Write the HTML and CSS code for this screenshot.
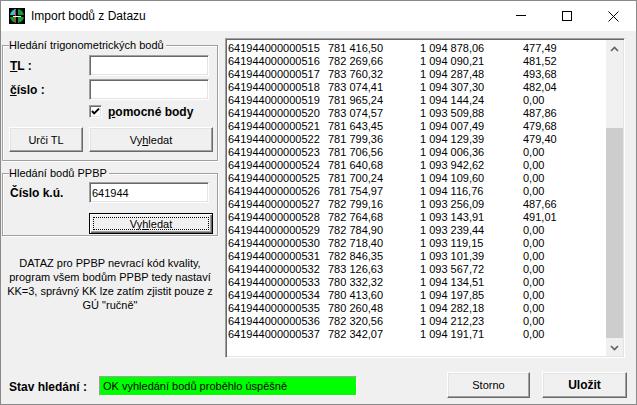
FILE: index.html
```html
<!DOCTYPE html>
<html lang="cs">
<head>
<meta charset="utf-8">
<title>Import bodů z Datazu</title>
<link rel="stylesheet" href="styles.css">
</head>
<body>
<div class="window">
  <div class="titlebar">
    <svg class="app-icon" width="16" height="16" viewBox="0 0 16 16">
      <rect width="16" height="16" fill="#000"/>
      <circle cx="8" cy="8" r="7" fill="#10a030"/>
      <path d="M8 1 A7 7 0 0 0 1 8 H8 Z" fill="#20c8f0"/>
      <path d="M8 1 V15 M1 8 H15" stroke="#000" stroke-width="2"/>
      <path d="M6.5 2 V14" stroke="#ff2020" stroke-width="1"/>
      <path d="M4 8.5 H12" stroke="#fff" stroke-width="1"/>
    </svg>
    <span class="title">Import bodů z Datazu</span>
    <div class="controls">
      <span class="ctl"><svg width="10" height="10" viewBox="0 0 10 10"><path d="M0 4.5 H10" stroke="#000" stroke-width="1"/></svg></span>
      <span class="ctl"><svg width="10" height="10" viewBox="0 0 10 10"><rect x="0.5" y="0.5" width="9" height="9" fill="none" stroke="#000" stroke-width="1"/></svg></span>
      <span class="ctl"><svg width="11" height="11" viewBox="0 0 11 11"><path d="M0.5 0.5 L10.5 10.5 M10.5 0.5 L0.5 10.5" stroke="#000" stroke-width="1"/></svg></span>
    </div>
  </div>

  <div class="main">
    <div class="left">
      <fieldset class="group g1">
        <legend>Hledání trigonometrických bodů</legend>
        <div class="row r-tl">
          <label class="lbl"><u>T</u>L :</label>
          <div class="field"></div>
        </div>
        <div class="row r-cislo">
          <label class="lbl"><u>č</u>íslo :</label>
          <div class="field"></div>
        </div>
        <div class="row r-check">
          <span class="checkbox">
            <svg width="11" height="11" viewBox="0 0 11 11"><path d="M2 5 L4.2 7.4 L9 2.6" fill="none" stroke="#000" stroke-width="2"/></svg>
          </span>
          <span class="check-lbl"><u>p</u>omocné body</span>
        </div>
        <div class="row r-btns">
          <button class="btn b-urci">Urči TL</button>
          <button class="btn b-vyh">Vy<u>h</u>ledat</button>
        </div>
      </fieldset>

      <fieldset class="group g2">
        <legend>Hledání bodů PPBP</legend>
        <div class="row r-ku">
          <label class="lbl">Číslo k.ú.</label>
          <div class="field"><span class="field-text">641944</span></div>
        </div>
        <div class="row r-btn2">
          <button class="btn btn-default b-vyh2">Vy<u>h</u>ledat</button>
        </div>
      </fieldset>

      <p class="note">DATAZ pro PPBP nevrací kód kvality,<br>program všem bodům PPBP tedy nastaví<br>KK=3, správný KK lze zatím zjistit pouze z<br>GÚ "ručně"</p>
    </div>

    <div class="list">
      <div class="rows">
        <div class="lrow"><span>641944000000515</span><span>781 416,50</span><span>1 094 878,06</span><span>477,49</span></div>
        <div class="lrow"><span>641944000000516</span><span>782 269,66</span><span>1 094 090,21</span><span>481,52</span></div>
        <div class="lrow"><span>641944000000517</span><span>783 760,32</span><span>1 094 287,48</span><span>493,68</span></div>
        <div class="lrow"><span>641944000000518</span><span>783 074,41</span><span>1 094 307,30</span><span>482,04</span></div>
        <div class="lrow"><span>641944000000519</span><span>781 965,24</span><span>1 094 144,24</span><span>0,00</span></div>
        <div class="lrow"><span>641944000000520</span><span>783 074,57</span><span>1 093 509,88</span><span>487,86</span></div>
        <div class="lrow"><span>641944000000521</span><span>781 643,45</span><span>1 094 007,49</span><span>479,68</span></div>
        <div class="lrow"><span>641944000000522</span><span>781 799,36</span><span>1 094 129,39</span><span>479,40</span></div>
        <div class="lrow"><span>641944000000523</span><span>781 706,56</span><span>1 094 006,36</span><span>0,00</span></div>
        <div class="lrow"><span>641944000000524</span><span>781 640,68</span><span>1 093 942,62</span><span>0,00</span></div>
        <div class="lrow"><span>641944000000525</span><span>781 700,24</span><span>1 094 109,60</span><span>0,00</span></div>
        <div class="lrow"><span>641944000000526</span><span>781 754,97</span><span>1 094 116,76</span><span>0,00</span></div>
        <div class="lrow"><span>641944000000527</span><span>782 799,16</span><span>1 093 256,09</span><span>487,66</span></div>
        <div class="lrow"><span>641944000000528</span><span>782 764,68</span><span>1 093 143,91</span><span>491,01</span></div>
        <div class="lrow"><span>641944000000529</span><span>782 784,90</span><span>1 093 239,44</span><span>0,00</span></div>
        <div class="lrow"><span>641944000000530</span><span>782 718,40</span><span>1 093 119,15</span><span>0,00</span></div>
        <div class="lrow"><span>641944000000531</span><span>782 846,35</span><span>1 093 101,39</span><span>0,00</span></div>
        <div class="lrow"><span>641944000000532</span><span>783 126,63</span><span>1 093 567,72</span><span>0,00</span></div>
        <div class="lrow"><span>641944000000533</span><span>780 332,32</span><span>1 094 134,51</span><span>0,00</span></div>
        <div class="lrow"><span>641944000000534</span><span>780 413,60</span><span>1 094 197,85</span><span>0,00</span></div>
        <div class="lrow"><span>641944000000535</span><span>780 260,48</span><span>1 094 282,18</span><span>0,00</span></div>
        <div class="lrow"><span>641944000000536</span><span>782 320,56</span><span>1 094 212,23</span><span>0,00</span></div>
        <div class="lrow"><span>641944000000537</span><span>782 342,07</span><span>1 094 191,71</span><span>0,00</span></div>
      </div>
      <div class="scrollbar">
        <div class="sb-btn"><svg width="9" height="6" viewBox="0 0 9 6"><path d="M1 5 L4.5 1.5 L8 5" fill="none" stroke="#606060" stroke-width="1.6"/></svg></div>
        <div class="sb-track"><div class="sb-thumb"></div></div>
        <div class="sb-btn"><svg width="9" height="6" viewBox="0 0 9 6"><path d="M1 1 L4.5 4.5 L8 1" fill="none" stroke="#606060" stroke-width="1.6"/></svg></div>
      </div>
    </div>
  </div>

  <div class="statusbar">
    <span class="status-lbl">Stav hledání :</span>
    <div class="status-box">OK vyhledání bodů proběhlo úspěšně</div>
    <button class="btn b-storno">Storno</button>
    <button class="btn b-ulozit">Uložit</button>
  </div>
</div>
</body>
</html>
```

FILE: styles.css
```css
html, body {
  margin: 0;
  padding: 0;
}

body {
  width: 637px;
  height: 405px;
  overflow: hidden;
  background: #ffffff;
  font-family: "Liberation Sans", Arial, sans-serif;
  font-size: 11px;
  color: #000;
}

.window {
  box-sizing: border-box;
  width: 637px;
  height: 405px;
  border: 1px solid #8a8a8a;
  background: #f0f0f0;
  display: flex;
  flex-direction: column;
}

/* title bar */
.titlebar {
  flex: none;
  height: 30px;
  background: #ffffff;
  display: flex;
  align-items: center;
}

.app-icon {
  flex: none;
  margin-left: 8px;
}

.title {
  margin-left: 6px;
  font-size: 12px;
}

.controls {
  margin-left: auto;
  display: flex;
  height: 100%;
}

.ctl {
  width: 46px;
  display: flex;
  align-items: center;
  justify-content: center;
}

/* main area */
.main {
  flex: none;
  box-sizing: border-box;
  height: 327px;
  padding: 7px 0 0 1px;
  display: flex;
}

.left {
  flex: none;
  width: 216px;
  display: flex;
  flex-direction: column;
}

.group {
  margin: 0;
  padding: 0 0 0 7px;
  border: 1px solid #a0a0a0;
  box-shadow: inset 1px 1px #ffffff, 1px 1px #ffffff;
  min-width: 0;
}

.group legend {
  padding: 0 2px 0 0;
  margin-left: -1px;
  background: #f0f0f0;
  line-height: 13px;
  font-size: 11px;
}

.g1 {
  margin-top: 1px;
  padding-bottom: 8px;
}

.g2 {
  margin-top: 6px;
  padding-bottom: 1px;
}

.row {
  display: flex;
  align-items: center;
}

.lbl {
  width: 79px;
  flex: none;
  font-weight: bold;
  font-size: 12px;
}

.field {
  box-sizing: border-box;
  width: 120px;
  height: 21px;
  background: #ffffff;
  border: 1px solid;
  border-color: #a0a0a0 #ffffff #ffffff #a0a0a0;
  box-shadow: inset 1px 1px #696969, inset -1px -1px #e3e3e3;
  display: flex;
  align-items: center;
}

.field-text {
  padding-left: 2px;
  font-size: 11px;
}

.r-tl { margin-top: 3px; }
.r-cislo { margin-top: 3px; }

.r-check {
  margin-top: 5px;
  height: 13px;
}

.checkbox {
  box-sizing: border-box;
  width: 13px;
  height: 13px;
  margin-left: 79px;
  background: #ffffff;
  border: 1px solid;
  border-color: #a0a0a0 #ffffff #ffffff #a0a0a0;
  box-shadow: inset 1px 1px #696969, inset -1px -1px #e3e3e3;
  display: flex;
  align-items: center;
  justify-content: center;
}

.check-lbl {
  margin-left: 6px;
  font-weight: bold;
  font-size: 12px;
}

.r-btns {
  margin-top: 9px;
}

.btn {
  box-sizing: border-box;
  margin: 0;
  padding: 0;
  background: #f0f0f0;
  border: 1px solid;
  border-color: #ffffff #696969 #696969 #ffffff;
  box-shadow: inset -1px -1px #a0a0a0, inset 1px 1px #e3e3e3;
  font-family: "Liberation Sans", Arial, sans-serif;
  font-size: 11px;
  color: #000;
}

.b-urci {
  width: 74px;
  height: 25px;
  margin-left: -1px;
}

.b-vyh {
  width: 124px;
  height: 25px;
  margin-left: 6px;
}

.r-ku {
  margin-top: 2px;
}

.r-btn2 {
  margin-top: 10px;
}

.btn-default {
  border: 1px solid #000000;
  box-shadow: inset 1px 1px #ffffff, inset -1px -1px #696969, inset -2px -2px #a0a0a0;
  outline: 1px dotted #000000;
  outline-offset: -5px;
}

.b-vyh2 {
  width: 124px;
  height: 21px;
  margin-left: 79px;
}

.note {
  margin: 20px 0 0 0;
  text-align: center;
  line-height: 14px;
  font-size: 11px;
}

/* list box */
.list {
  flex: none;
  box-sizing: border-box;
  margin-left: 7px;
  width: 400px;
  height: 320px;
  background: #ffffff;
  border: 1px solid;
  border-color: #a0a0a0 #ffffff #ffffff #a0a0a0;
  box-shadow: inset 1px 1px #696969, inset -1px -1px #e3e3e3;
  display: flex;
}

.rows {
  flex: 1;
  padding: 3px 0 0 2px;
  overflow: hidden;
}

.lrow {
  display: flex;
  height: 13px;
  line-height: 13px;
  font-size: 11px;
  white-space: nowrap;
}

.lrow span:nth-child(1) { width: 100px; }
.lrow span:nth-child(2) { width: 92px; }
.lrow span:nth-child(3) { width: 103px; }

.scrollbar {
  flex: none;
  width: 17px;
  margin: 1px 1px 1px 0;
  background: #f0f0f0;
  display: flex;
  flex-direction: column;
}

.sb-btn {
  height: 17px;
  flex: none;
  display: flex;
  align-items: center;
  justify-content: center;
}

.sb-track {
  flex: 1;
}

.sb-thumb {
  margin-top: 71px;
  height: 210px;
  background: #cdcdcd;
}

/* status bar */
.statusbar {
  flex: 1;
  display: flex;
  align-items: flex-start;
  padding: 14px 0 0 8px;
}

.status-lbl {
  width: 90px;
  flex: none;
  margin-top: 8px;
  line-height: 14px;
  font-weight: bold;
  font-size: 12px;
}

.status-box {
  box-sizing: border-box;
  width: 258px;
  height: 20px;
  margin-top: 4px;
  padding-left: 3px;
  background: #00ff00;
  border: 1px solid;
  border-color: #a0a0a0 #ffffff #ffffff #a0a0a0;
  line-height: 18px;
  font-size: 11px;
}

.b-storno {
  width: 83px;
  height: 26px;
  margin-left: 90px;
}

.b-ulozit {
  width: 85px;
  height: 26px;
  margin-left: 12px;
  font-weight: bold;
  font-size: 12px;
}
```
